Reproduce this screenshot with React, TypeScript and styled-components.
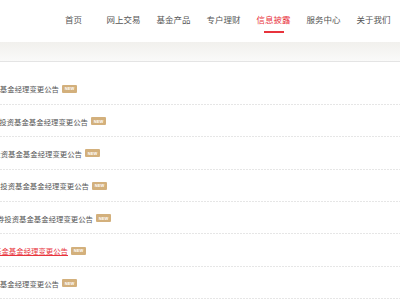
import React from 'react'
import styled, { createGlobalStyle } from 'styled-components'

const GlobalStyle = createGlobalStyle`
  html, body {
    margin: 0;
    padding: 0;
    background: #fff;
    overflow: hidden;
  }
  body {
    width: 400px;
    height: 300px;
    font-family: "Noto Sans CJK SC", "Noto Sans", sans-serif;
  }
`

const Header = styled.header`
  height: 42px;
  display: flex;
  justify-content: flex-end;
  padding-right: 1.5px;
  background: #fff;
`
const NavItem = styled.div<{ $active?: boolean }>`
  position: relative;
  width: 50px;
  display: flex;
  align-items: center;
  justify-content: center;
  height: 38px;
  font-size: 8.5px;
  color: ${(p) => (p.$active ? '#e8333c' : '#555')};
  &::after {
    content: '';
    display: ${(p) => (p.$active ? 'block' : 'none')};
    position: absolute;
    left: 15px;
    right: 15px;
    top: 31px;
    height: 1.5px;
    background: #e8333c;
  }
`
const Band = styled.div`
  height: 19px;
  background: linear-gradient(#f1f0ed, #fafaf9);
  border-bottom: 1px solid #e4e4e4;
`
const List = styled.ul`
  list-style: none;
  margin: 0;
  padding: 10.5px 0 0;
`
const Row = styled.li`
  height: 32.4px;
  display: flex;
  align-items: center;
  background: linear-gradient(to right, #e6e6e6 60%, transparent 0) left bottom / 3px 1px repeat-x;
`
const TitleCell = styled.div<{ $end: number }>`
  width: ${(p) => p.$end}px;
  flex: none;
  display: flex;
  justify-content: flex-end;
`
const Title = styled.a<{ $hot?: boolean }>`
  white-space: nowrap;
  font-size: 7.4px;
  color: ${(p) => (p.$hot ? '#e8333c' : '#555')};
  text-decoration: ${(p) => (p.$hot ? 'underline' : 'none')};
`
const Badge = styled.span`
  margin-left: 3px;
  width: 15px;
  height: 8px;
  border-radius: 1px;
  background: #d3b07c;
  color: #fff;
  font-family: "Liberation Sans", Arial, sans-serif;
  font-size: 4px;
  font-weight: 700;
  display: flex;
  align-items: center;
  justify-content: center;
`

const navs = ['首页', '网上交易', '基金产品', '专户理财', '信息披露', '服务中心', '关于我们']

const notices = [
  { title: '华夏回报证券投资基金基金经理变更公告', end: 59 },
  { title: '华夏成长证券投资基金基金经理变更公告', end: 88 },
  { title: '华夏红利证券投资基金基金经理变更公告', end: 82 },
  { title: '华夏蓝筹证券投资基金基金经理变更公告', end: 89 },
  { title: '华夏优势增长证券投资基金基金经理变更公告', end: 93 },
  { title: '华夏大盘精选混合型基金基金经理变更公告', end: 68, hot: true },
  { title: '华夏稳健回报证券投资基金基金经理变更公告', end: 59 },
]

const App = () => {
  return (
    <>
      <GlobalStyle />
      <Header>
        {navs.map((n) => (
          <NavItem key={n} $active={n === '信息披露'}>{n}</NavItem>
        ))}
      </Header>
      <Band />
      <List>
        {notices.map((item, i) => (
          <Row key={i}>
            <TitleCell $end={item.end}>
              <Title $hot={item.hot}>{item.title}</Title>
            </TitleCell>
            <Badge>NEW</Badge>
          </Row>
        ))}
      </List>
    </>
  )
}

export default App
